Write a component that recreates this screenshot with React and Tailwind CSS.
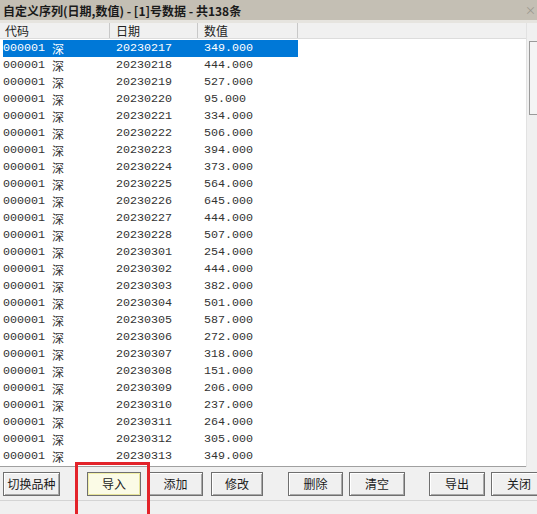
const rows = [
  ["20230217", "349.000"],
  ["20230218", "444.000"],
  ["20230219", "527.000"],
  ["20230220", "95.000"],
  ["20230221", "334.000"],
  ["20230222", "506.000"],
  ["20230223", "394.000"],
  ["20230224", "373.000"],
  ["20230225", "564.000"],
  ["20230226", "645.000"],
  ["20230227", "444.000"],
  ["20230228", "507.000"],
  ["20230301", "254.000"],
  ["20230302", "444.000"],
  ["20230303", "382.000"],
  ["20230304", "501.000"],
  ["20230305", "587.000"],
  ["20230306", "272.000"],
  ["20230307", "318.000"],
  ["20230308", "151.000"],
  ["20230309", "206.000"],
  ["20230310", "237.000"],
  ["20230311", "264.000"],
  ["20230312", "305.000"],
  ["20230313", "349.000"],
];

const buttons = [
  { label: "切换品种", w: "w-[57px]", ml: "ml-[3px]" },
  { label: "导入", w: "w-[54px]", ml: "ml-[27px]", active: true },
  { label: "添加", w: "w-[55px]", ml: "ml-[7px]" },
  { label: "修改", w: "w-[52px]", ml: "ml-[8px]" },
  { label: "删除", w: "w-[55px]", ml: "ml-[25px]" },
  { label: "清空", w: "w-[56px]", ml: "ml-[6px]" },
  { label: "导出", w: "w-[56px]", ml: "ml-[24px]" },
  { label: "关闭", w: "w-[56px]", ml: "ml-[6px]" },
];

const mono = "font-['Liberation_Mono','Noto_Sans_CJK_SC',monospace]";
const cjk = "font-['Noto_Sans_CJK_SC','Liberation_Sans',sans-serif]";

export default function App() {
  return (
    <div className="relative flex h-[514px] w-[537px] flex-col overflow-hidden bg-[#f0f0f0]">
      <div className={`flex h-[20px] shrink-0 items-center justify-between bg-[#c4bfb4] pl-[3px] pr-[1px] text-[12px] font-bold text-[#1a1a1a] ${cjk}`}>
        <span className="pt-[1px]">自定义序列(日期,数值) - [1]号数据 - 共138条</span>
        <span className="text-[11px] font-normal text-[#9a968d]">×</span>
      </div>
      <div className="h-[3px] shrink-0 bg-[#e6e4df]" />

      <div className="flex h-[444px] shrink-0">
        <div className="flex w-[526px] flex-col border-b border-[#a0a0a0] bg-white">
          <div className={`flex h-[16px] shrink-0 items-center border-b border-[#dcdcdc] bg-[#f0f0f0] text-[12px] text-[#222] ${cjk}`}>
            <div className="w-[110px] border-r border-[#c8c8c8] pl-[5px] leading-[15px]">代码</div>
            <div className="w-[88px] border-r border-[#c8c8c8] pl-[6px] leading-[15px]">日期</div>
            <div className="w-[100px] border-r border-[#c8c8c8] pl-[6px] leading-[15px]">数值</div>
            <div className="flex-1" />
          </div>
          <div className="flex flex-col pt-[1px] pl-[3px]">
            {rows.map(([date, val], i) => (
              <div
                key={date}
                className={`flex h-[17px] w-[295px] items-center pt-[1px] text-[11.7px] ${mono} ${
                  i === 0 ? "bg-[#0078d7] text-white" : "text-[#333]"
                }`}
              >
                <div className="flex w-[107px] items-center">
                  <span>000001</span>
                  <span className={`ml-[7px] text-[12px] ${cjk}`}>深</span>
                </div>
                <div className="w-[88px] pl-[6px]">{date}</div>
                <div className="pl-[6px]">{val}</div>
              </div>
            ))}
          </div>
        </div>
        <div className="flex w-[11px] flex-col border-l border-[#e2e2e2] bg-[#f0f0f0] pt-[18px]">
          <div className="ml-[2px] h-[74px] border border-r-0 border-[#9a9a9a] bg-[#f4f4f4]" />
        </div>
      </div>

      <div className={`flex items-center pt-[5px] text-[12px] text-[#1a1a1a] ${cjk}`}>
        {buttons.map((b) => (
          <div
            key={b.label}
            className={`${b.w} ${b.ml} flex h-[24px] shrink-0 items-center justify-center border border-[#6f6f6f] ${
              b.active
                ? "bg-[#fbfbe6] shadow-[inset_1px_1px_0_#f2f0a8,inset_-1px_-1px_0_#e6e39a]"
                : "bg-[#f0f0f0] shadow-[inset_1px_1px_0_#ffffff,inset_-1px_-1px_0_#a8a8a8]"
            }`}
          >
            {b.label}
          </div>
        ))}
      </div>
      <div className="mt-[4px] h-[1px] bg-[#d4d4d4]" />

      <div className="absolute left-[75px] top-[462px] h-[60px] w-[75px] border-[3px] border-[#e3232a]" />
    </div>
  );
}
